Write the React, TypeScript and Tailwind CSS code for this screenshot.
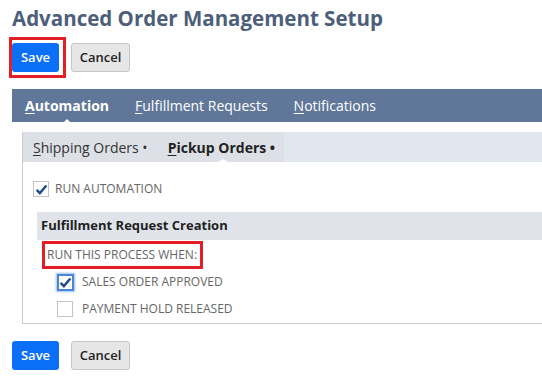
const Check = () => (
  <svg viewBox="0 0 16 16" className="w-[13px] h-[13px]">
    <path d="M2 8.5 L6 12.5 L14 3" fill="none" stroke="#1f4d8c" strokeWidth="3" />
  </svg>
);

function Box({ checked, focus }: { checked?: boolean; focus?: boolean }) {
  return (
    <span
      className={
        focus
          ? "w-[17px] h-[17px] flex items-center justify-center bg-white border-2 border-[#4a86d8] shadow-[0_0_2px_1px_#9cc0ee]"
          : "w-[16px] h-[16px] flex items-center justify-center bg-white border border-[#c4c4c4]"
      }
    >
      {checked && <Check />}
    </span>
  );
}

function Buttons() {
  return (
    <div className="flex gap-[12px] ml-[12px]">
      <button className="w-[47px] h-[29px] rounded-[3px] bg-[#0b6ff7] text-white text-[13px] font-semibold">
        Save
      </button>
      <button className="w-[59px] h-[29px] rounded-[3px] bg-[#e6e6e6] border border-[#c6c6c6] text-[#222] text-[13px] font-semibold">
        Cancel
      </button>
    </div>
  );
}

export default function App() {
  return (
    <div className="w-[542px] h-[378px] overflow-hidden bg-white font-['Open_Sans',sans-serif]">
      <h1 className="pl-[12px] pt-[4px] text-[20.5px] leading-[28px] font-bold text-[#4d5e7b]">
        Advanced Order Management Setup
      </h1>

      <div className="relative mt-[11px]">
        <Buttons />
        <span className="absolute left-[9px] top-[-6px] w-[57px] h-[41px] border-[3px] border-[#e31e26]" />
      </div>

      <div className="relative ml-[12px] mt-[17px] h-[33px] bg-[#607799] flex items-center gap-[26px] pl-[13px] text-[14px] text-white">
        <span className="relative font-bold">
          <u className="underline-offset-2">A</u>utomation
          <span className="absolute left-[36px] top-[24px] w-0 h-0 border-x-[6px] border-x-transparent border-b-[6px] border-b-white" />
        </span>
        <span>
          <u className="underline-offset-2">F</u>ulfillment Requests
        </span>
        <span>
          <u className="underline-offset-2">N</u>otifications
        </span>
      </div>

      <div className="ml-[22px] mt-[10px] h-[192px] border-l border-b border-[#cccccc]">
        <div className="flex h-[30px] bg-[#e1e7ef] text-[14px] text-[#333]">
          <div className="relative w-[261px] bg-[#dde0e6] flex items-center gap-[20px] pl-[10px] pt-[1px]">
            <span>
              <u className="underline-offset-2">S</u>hipping Orders •
            </span>
            <span className="relative font-bold text-[#222]">
              <u className="underline-offset-2">P</u>ickup Orders •
              <span className="absolute left-[49px] top-[22px] w-0 h-0 border-x-[6px] border-x-transparent border-b-[4px] border-b-white" />
            </span>
          </div>
        </div>

        <div className="flex items-center gap-[6px] pl-[10px] mt-[18px] text-[12px] text-[#666]">
          <Box checked />
          <span>RUN AUTOMATION</span>
        </div>

        <div className="ml-[14px] mt-[14px] h-[28px] bg-[#e0e4ea] flex items-center pl-[4px] text-[13px] font-bold text-[#222]">
          Fulfillment Request Creation
        </div>

        <div className="ml-[19px] mt-[1px] w-[161px] h-[28px] border-[3px] border-[#e31e26] flex items-center pl-[2px] text-[12px] text-[#666]">
          RUN THIS PROCESS WHEN:
        </div>

        <div className="flex flex-col gap-[9px] ml-[34px] mt-[4px] text-[12px] text-[#666]">
          <div className="flex items-center gap-[8px]">
            <Box checked focus />
            <span>SALES ORDER APPROVED</span>
          </div>
          <div className="flex items-center gap-[9px]">
            <Box />
            <span>PAYMENT HOLD RELEASED</span>
          </div>
        </div>
      </div>

      <div className="mt-[17px]">
        <Buttons />
      </div>
    </div>
  );
}
